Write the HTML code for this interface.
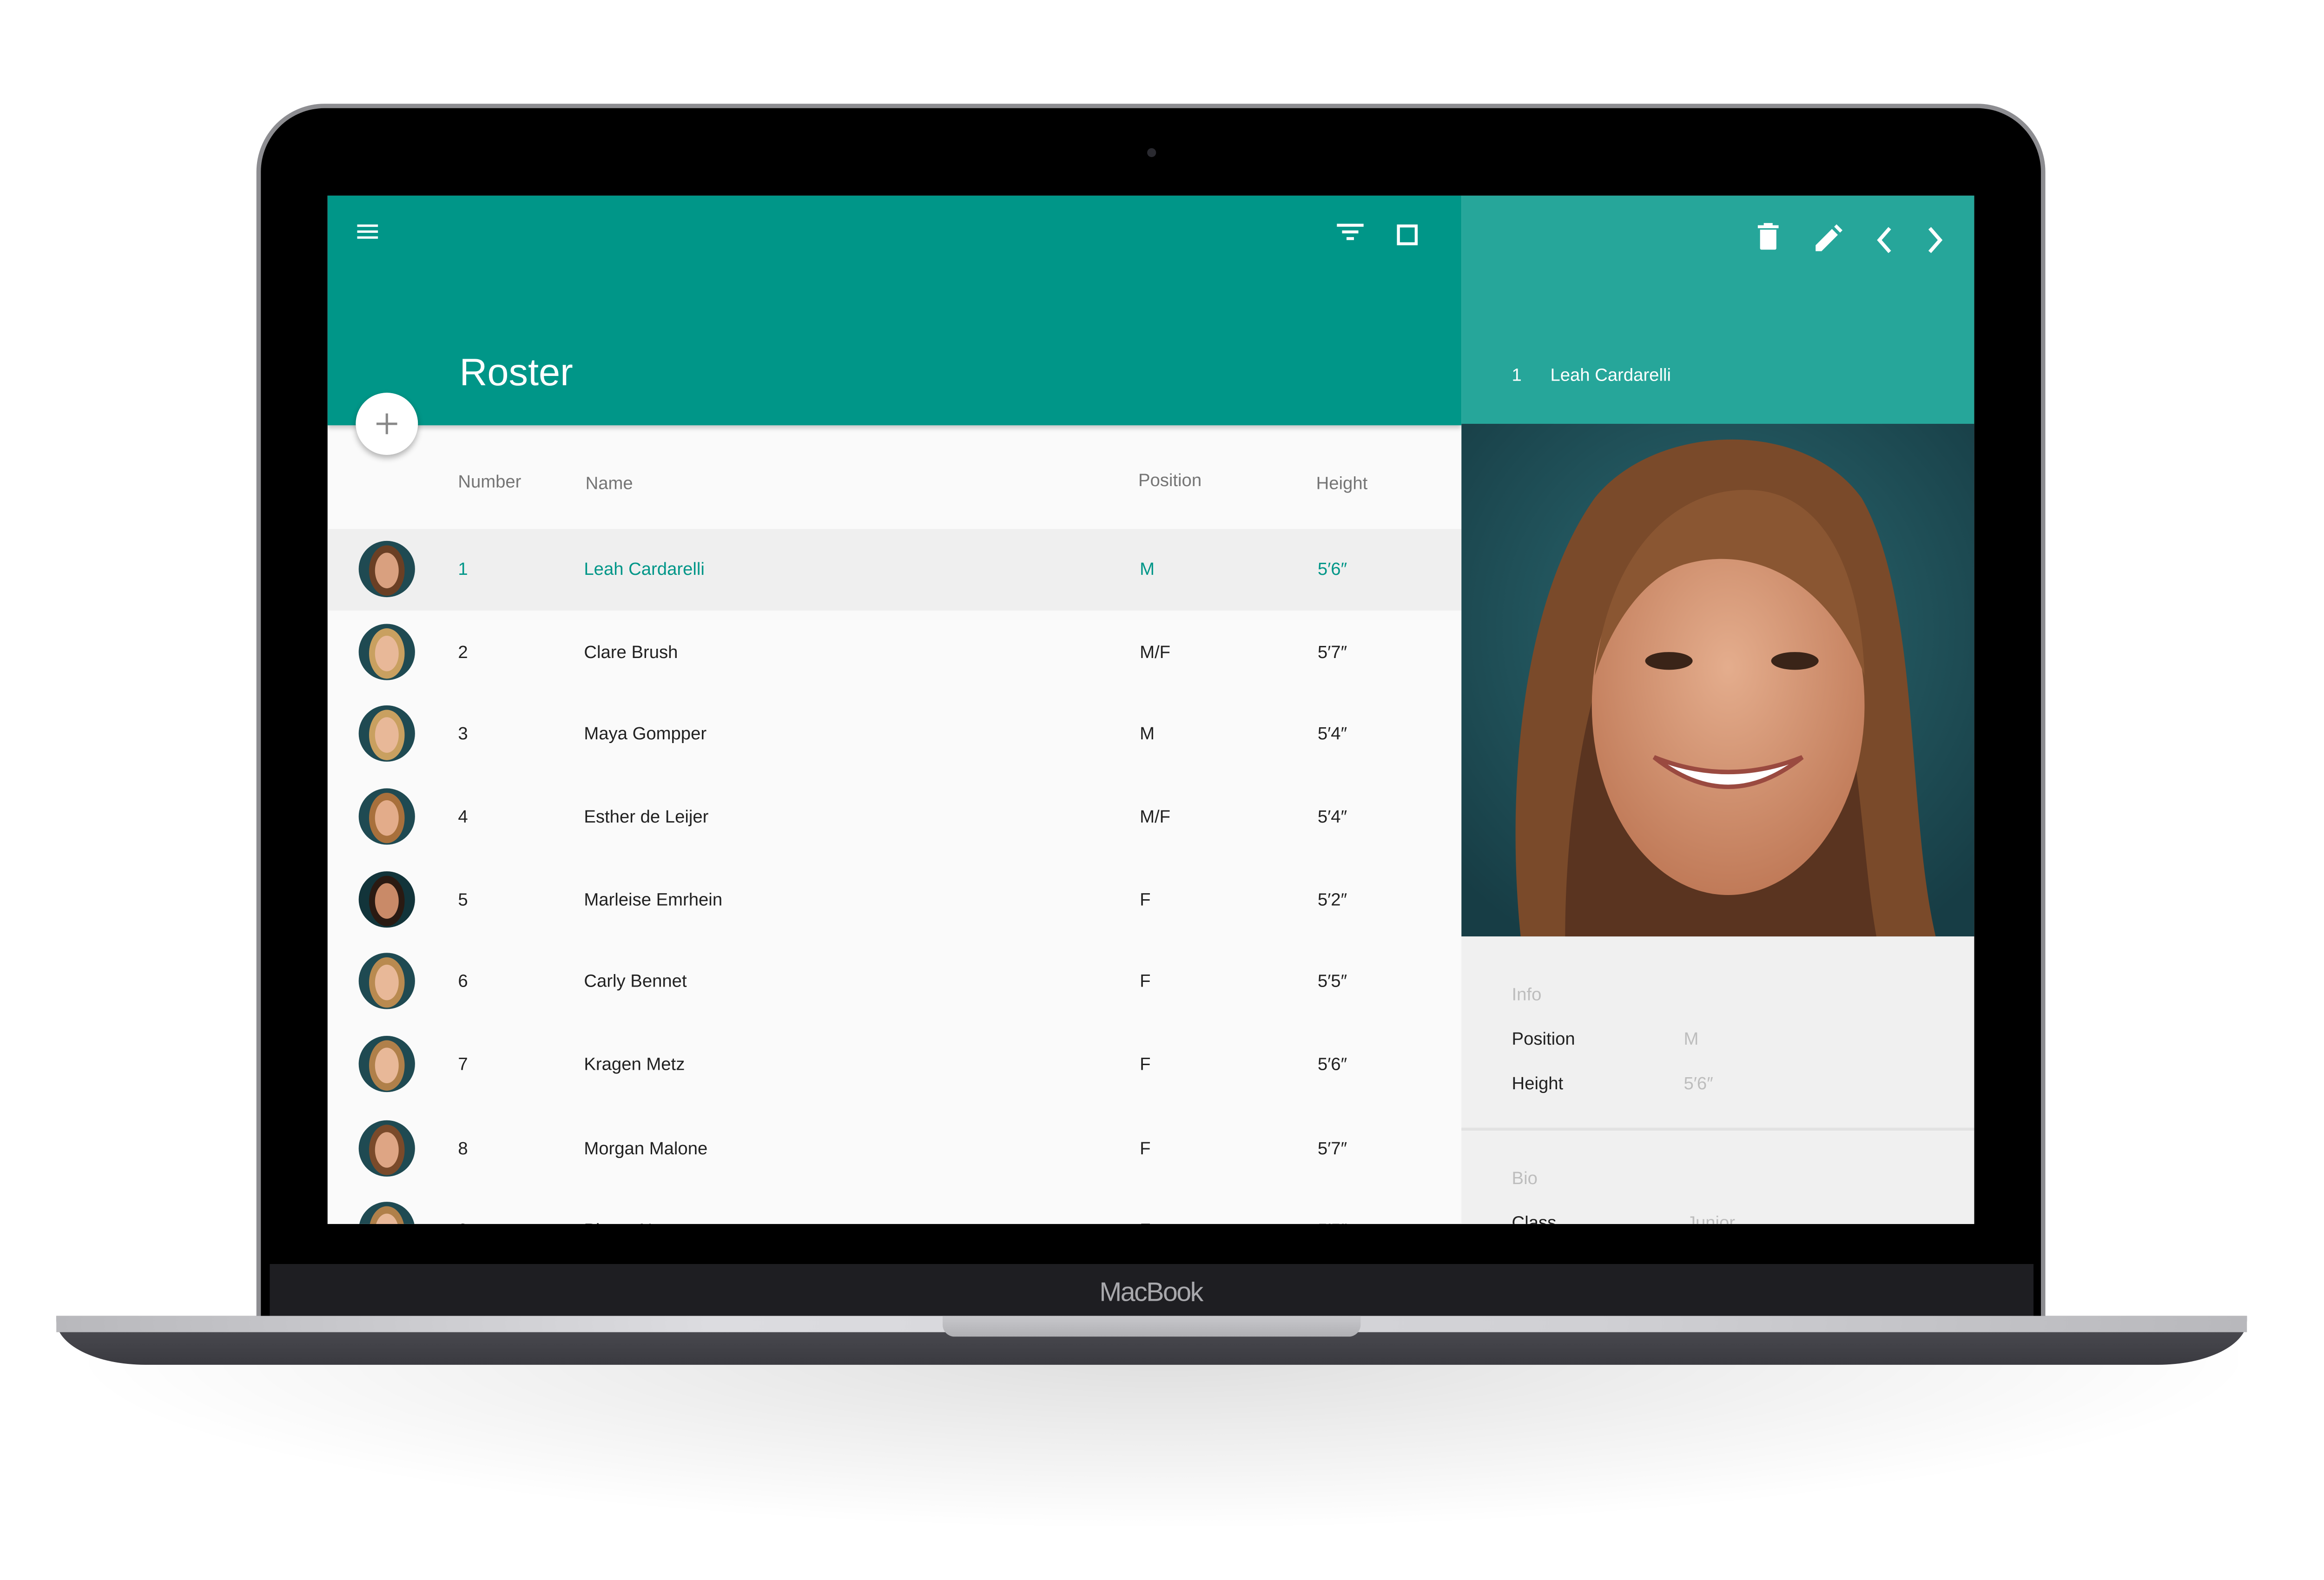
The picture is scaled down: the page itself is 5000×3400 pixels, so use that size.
<!DOCTYPE html>
<html><head><meta charset="utf-8"><style>
html,body{margin:0;padding:0;background:#fff;}
body{width:5000px;height:3400px;overflow:hidden;position:relative;font-family:"Liberation Sans",sans-serif;}
#w{position:absolute;left:0;top:0;width:1568px;height:1066px;transform:scale(3.18878);transform-origin:0 0;}
.a{position:absolute;}
.t{position:absolute;font-size:12px;color:#212121;white-space:nowrap;line-height:14px;}
.av{position:absolute;left:242px;width:38px;height:38px;border-radius:50%;overflow:hidden;background:#1f4a52;}
</style></head><body><div id="w">
<!-- floor shadow -->
<div class="a" style="left:60px;top:900px;width:1450px;height:130px;background:radial-gradient(ellipse at 50% 10%,rgba(0,0,0,0.13),rgba(0,0,0,0.04) 50%,rgba(0,0,0,0) 72%);"></div>
<!-- lid -->
<div class="a" style="left:173px;top:70px;width:1207px;height:830px;border-radius:46px 46px 0 0;background:#8d8d91;"></div>
<div class="a" style="left:176px;top:73px;width:1201px;height:825px;border-radius:43px 43px 0 0;background:#000;"></div>
<div class="a" style="left:774px;top:100px;width:6px;height:6px;border-radius:50%;background:#2a2a30;"></div>
<div class="a" style="left:182px;top:853px;width:1190px;height:37px;background:#1e1e22;"></div>
<div class="a" style="left:0;top:862px;width:1553px;text-align:center;color:#a8a8ac;font-size:18px;letter-spacing:-0.8px;">MacBook</div>
<!-- base -->
<div class="a" style="left:38px;top:888px;width:1478px;height:33px;border-radius:0 0 60px 60px/0 0 30px 30px;background:linear-gradient(#4f4f55,#3a3a40);"></div>
<div class="a" style="left:38px;top:888px;width:1478px;height:11px;background:linear-gradient(90deg,#b8b8bc,#dcdce0 30%,#d0d0d4 70%,#b8b8bc);"></div>
<div class="a" style="left:636px;top:888px;width:282px;height:14px;border-radius:0 0 8px 8px;background:linear-gradient(#c8c8cc,#b0b0b4);"></div>
<!-- screen -->
<div class="a" style="left:221px;top:132px;width:1111px;height:694px;overflow:hidden;background:#fafafa;">
 <!-- left header -->
 <div class="a" style="left:0;top:0;width:765px;height:155px;background:#009688;box-shadow:0 2px 3px rgba(0,0,0,0.2);"></div>
 <svg class="a" style="left:19px;top:18px" width="16" height="14"><rect x="1" y="1.5" width="14" height="1.6" fill="#fff"/><rect x="1" y="5.5" width="14" height="1.6" fill="#fff"/><rect x="1" y="9.5" width="14" height="1.6" fill="#fff"/></svg>
 <svg class="a" style="left:680px;top:18px" width="20" height="14"><rect x="1" y="1" width="18" height="2" fill="#fff"/><rect x="4.5" y="5.5" width="11" height="2" fill="#fff"/><rect x="7.5" y="10" width="5" height="2" fill="#fff"/></svg>
 <svg class="a" style="left:721px;top:19px" width="16" height="16"><rect x="1.5" y="1.5" width="12" height="12" fill="none" stroke="#fff" stroke-width="2"/></svg>
 <div class="t" style="left:89px;top:104px;font-size:26px;line-height:30px;color:#fff;">Roster</div>
 <div class="a" style="left:19px;top:133px;width:42px;height:42px;border-radius:50%;background:#fff;box-shadow:0 2px 4px rgba(0,0,0,0.3);"></div>
 <svg class="a" style="left:32px;top:146px" width="16" height="16"><rect x="7.2" y="1" width="1.6" height="14" fill="#888"/><rect x="1" y="7.2" width="14" height="1.6" fill="#888"/></svg>
 <div class="t" style="left:88px;top:186px;color:#757575;">Number</div>
 <div class="t" style="left:174px;top:187px;color:#757575;">Name</div>
 <div class="t" style="left:547px;top:185px;color:#757575;">Position</div>
 <div class="t" style="left:667px;top:187px;color:#757575;">Height</div>
 <div class="a" style="left:0;top:225px;width:765px;height:55px;background:#efefef;"></div>
 <!-- right -->
 <div class="a" style="left:765px;top:0;width:346px;height:154px;background:#26a69a;"></div>
 <svg class="a" style="left:964px;top:18px" width="20" height="22"><rect x="1" y="2" width="14" height="2" fill="#fff"/><rect x="5" y="0.5" width="6" height="2" fill="#fff"/><path d="M2.5 5h11v12.5a1 1 0 0 1-1 1h-9a1 1 0 0 1-1-1z" fill="#fff"/></svg>
 <svg class="a" style="left:1003px;top:19px" width="22" height="22"><path d="M1 14.5L12 3.5l4 4L5 18.5H1z" fill="#fff"/><path d="M13.5 2l1.6-1.6 4 4L17.5 6z" fill="#fff"/></svg>
 <svg class="a" style="left:1043px;top:20px" width="16" height="20"><path d="M11 2L4 10l7 8" fill="none" stroke="#fff" stroke-width="2.4"/></svg>
 <svg class="a" style="left:1077px;top:20px" width="16" height="20"><path d="M4 2l7 8-7 8" fill="none" stroke="#fff" stroke-width="2.4"/></svg>
 <div class="t" style="left:799px;top:114px;color:#fff;">1</div>
 <div class="t" style="left:825px;top:114px;color:#fff;">Leah Cardarelli</div>
 <svg class="a" style="left:765px;top:154px" width="346" height="346" viewBox="0 0 346 346">
  <defs><radialGradient id="bg" cx="50%" cy="40%" r="70%"><stop offset="0" stop-color="#2c6b73"/><stop offset="1" stop-color="#173d45"/></radialGradient>
  <radialGradient id="sk" cx="50%" cy="40%" r="60%"><stop offset="0" stop-color="#e4ad8d"/><stop offset="1" stop-color="#c07a58"/></radialGradient></defs>
  <rect width="346" height="346" fill="url(#bg)"/>
  <path d="M40 346C30 250 40 120 90 50 130 0 230 -5 270 50 310 120 300 260 320 346z" fill="#7a4a2a"/>
  <path d="M70 346C70 280 80 200 100 150L250 150C270 220 270 290 280 346z" fill="#5a3420"/>
  <ellipse cx="180" cy="190" rx="92" ry="128" fill="url(#sk)"/>
  <path d="M90 170C100 80 150 40 200 45 250 50 270 110 272 170 250 110 200 80 150 95 120 105 100 140 90 170z" fill="#8a5632"/>
  <ellipse cx="140" cy="160" rx="16" ry="6" fill="#3a2418"/><ellipse cx="225" cy="160" rx="16" ry="6" fill="#3a2418"/>
  <path d="M130 225Q180 265 230 225Q180 245 130 225z" fill="#fff" stroke="#9a4a40" stroke-width="3"/>
 </svg>
 <div class="a" style="left:765px;top:500px;width:346px;height:194px;background:#f0f0f0;"></div>
 <div class="a" style="left:765px;top:629px;width:346px;height:2px;background:#e2e2e2;"></div>
 <div class="t" style="left:799px;top:532px;color:#bdbdbd;">Info</div>
 <div class="t" style="left:799px;top:562px;">Position</div><div class="t" style="left:915px;top:562px;color:#bdbdbd;">M</div>
 <div class="t" style="left:799px;top:592px;">Height</div><div class="t" style="left:915px;top:592px;color:#bdbdbd;">5′6″</div>
 <div class="t" style="left:799px;top:656px;color:#bdbdbd;">Bio</div>
 <div class="t" style="left:799px;top:686px;">Class</div><div class="t" style="left:917px;top:686px;color:#bdbdbd;">Junior</div>
</div>
<!-- rows (absolute in wrapper coords) -->
<div id="rows" class="a" style="left:0;top:0;width:1568px;height:826px;overflow:hidden;">
<div class="av" style="top:365px"><div class="a" style="left:7px;top:3px;width:24px;height:34px;border-radius:50%;background:#6a3f24"></div><div class="a" style="left:11px;top:8px;width:16px;height:24px;border-radius:50%;background:#d9a07f"></div></div>
<div class="av" style="top:421px"><div class="a" style="left:7px;top:3px;width:24px;height:34px;border-radius:50%;background:#c9a060"></div><div class="a" style="left:11px;top:8px;width:16px;height:24px;border-radius:50%;background:#e8b898"></div></div>
<div class="av" style="top:476px"><div class="a" style="left:7px;top:3px;width:24px;height:34px;border-radius:50%;background:#c9a060"></div><div class="a" style="left:11px;top:8px;width:16px;height:24px;border-radius:50%;background:#e8b898"></div></div>
<div class="av" style="top:532px"><div class="a" style="left:7px;top:3px;width:24px;height:34px;border-radius:50%;background:#a8703c"></div><div class="a" style="left:11px;top:8px;width:16px;height:24px;border-radius:50%;background:#e3ac8a"></div></div>
<div class="av" style="top:588px;background:#12343a"><div class="a" style="left:7px;top:3px;width:24px;height:34px;border-radius:50%;background:#2a1a12"></div><div class="a" style="left:11px;top:8px;width:16px;height:24px;border-radius:50%;background:#c98a68"></div></div>
<div class="av" style="top:643px"><div class="a" style="left:7px;top:3px;width:24px;height:34px;border-radius:50%;background:#b98a50"></div><div class="a" style="left:11px;top:8px;width:16px;height:24px;border-radius:50%;background:#e8b898"></div></div>
<div class="av" style="top:699px"><div class="a" style="left:7px;top:3px;width:24px;height:34px;border-radius:50%;background:#b0804a"></div><div class="a" style="left:11px;top:8px;width:16px;height:24px;border-radius:50%;background:#e8b898"></div></div>
<div class="av" style="top:756px"><div class="a" style="left:7px;top:3px;width:24px;height:34px;border-radius:50%;background:#7a4a2a"></div><div class="a" style="left:11px;top:8px;width:16px;height:24px;border-radius:50%;background:#dea584"></div></div>
<div class="av" style="top:811px"><div class="a" style="left:7px;top:3px;width:24px;height:34px;border-radius:50%;background:#b0804a"></div><div class="a" style="left:11px;top:8px;width:16px;height:24px;border-radius:50%;background:#e8b898"></div></div>
<div class="t" style="left:309px;top:377px;color:#009688">1</div><div class="t" style="left:394px;top:377px;color:#009688">Leah Cardarelli</div><div class="t" style="left:769px;top:377px;color:#009688">M</div><div class="t" style="left:889px;top:377px;color:#009688">5′6″</div>
<div class="t" style="left:309px;top:433px">2</div><div class="t" style="left:394px;top:433px">Clare Brush</div><div class="t" style="left:769px;top:433px">M/F</div><div class="t" style="left:889px;top:433px">5′7″</div>
<div class="t" style="left:309px;top:488px">3</div><div class="t" style="left:394px;top:488px">Maya Gompper</div><div class="t" style="left:769px;top:488px">M</div><div class="t" style="left:889px;top:488px">5′4″</div>
<div class="t" style="left:309px;top:544px">4</div><div class="t" style="left:394px;top:544px">Esther de Leijer</div><div class="t" style="left:769px;top:544px">M/F</div><div class="t" style="left:889px;top:544px">5′4″</div>
<div class="t" style="left:309px;top:600px">5</div><div class="t" style="left:394px;top:600px">Marleise Emrhein</div><div class="t" style="left:769px;top:600px">F</div><div class="t" style="left:889px;top:600px">5′2″</div>
<div class="t" style="left:309px;top:655px">6</div><div class="t" style="left:394px;top:655px">Carly Bennet</div><div class="t" style="left:769px;top:655px">F</div><div class="t" style="left:889px;top:655px">5′5″</div>
<div class="t" style="left:309px;top:711px">7</div><div class="t" style="left:394px;top:711px">Kragen Metz</div><div class="t" style="left:769px;top:711px">F</div><div class="t" style="left:889px;top:711px">5′6″</div>
<div class="t" style="left:309px;top:768px">8</div><div class="t" style="left:394px;top:768px">Morgan Malone</div><div class="t" style="left:769px;top:768px">F</div><div class="t" style="left:889px;top:768px">5′7″</div>
<div class="t" style="left:309px;top:823px">9</div><div class="t" style="left:394px;top:823px">Player Name</div><div class="t" style="left:769px;top:823px">F</div><div class="t" style="left:889px;top:823px">5′5″</div>
</div>
</div></body></html>
